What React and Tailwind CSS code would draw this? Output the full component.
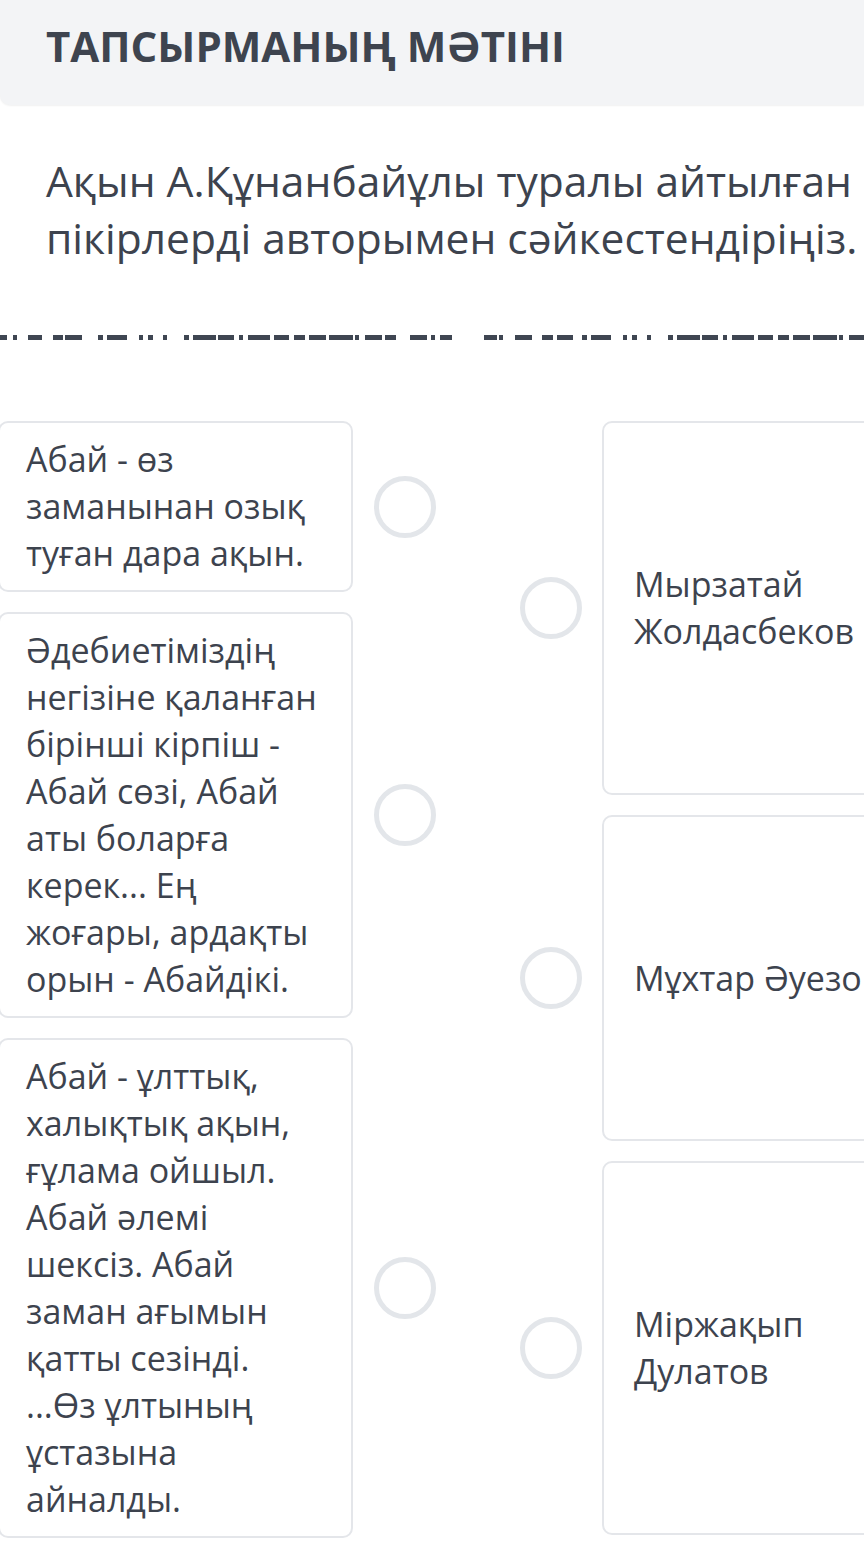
import React from "react";

const SEGS = [
  [0, 7], [13, 17], [28, 42], [53, 63], [65, 82], [98, 103], [107, 127], [139, 143], [148, 153], [163, 167],
  [184, 189], [193, 216], [218, 234], [239, 243], [248, 270], [274, 289], [294, 305], [309, 326], [329, 353],
  [355, 359], [365, 382], [385, 396], [410, 427], [431, 435], [440, 452],
  [484, 497], [499, 503], [515, 532], [542, 553], [557, 573], [582, 587], [591, 611], [623, 627], [632, 637],
  [647, 651], [668, 673], [677, 700], [702, 718], [723, 727], [732, 754], [758, 773], [778, 789], [793, 810],
  [813, 837], [839, 843], [849, 866],
];

function Circle() {
  return (
    <div className="w-[62px] h-[62px] shrink-0 rounded-full border-[5px] border-[#e3e6ea] bg-white" />
  );
}

function LeftCard({ lines }) {
  return (
    <div className="w-[355px] shrink-0 rounded-[10px] border-2 border-[#e4e6ea] bg-white pl-[26px] pr-2 py-[13px] text-[34px] leading-[47px] text-[#3d434e] whitespace-nowrap">
      {lines.map((l, i) => (
        <div key={i}>{l}</div>
      ))}
    </div>
  );
}

function RightCard({ lines, h }) {
  return (
    <div
      className={`w-[300px] shrink-0 rounded-[10px] border-2 border-[#e4e6ea] bg-white pl-[30px] flex flex-col justify-center text-[34px] leading-[47px] text-[#3d434e] whitespace-nowrap ${h}`}
    >
      {lines.map((l, i) => (
        <div key={i}>{l}</div>
      ))}
    </div>
  );
}

export default function App() {
  return (
    <div
      className="w-[864px] h-[1548px] overflow-hidden bg-white relative"
      style={{ fontFamily: "'Open Sans', 'Noto Sans', sans-serif" }}
    >
      <div className="h-[105px] bg-[#f3f4f6] rounded-bl-[10px] shadow-[0_1px_2px_rgba(0,0,0,0.06)] pl-[46px] pt-[14px]">
        <div className="text-[42px] font-bold text-[#3e444f] leading-normal whitespace-nowrap">
          ТАПСЫРМАНЫҢ МӘТІНІ
        </div>
      </div>

      <div className="pl-[46px] mt-[47px] text-[42.5px] leading-[57px] text-[#3d434e] whitespace-nowrap">
        <div>Ақын А.Құнанбайұлы туралы айтылған</div>
        <div>пікірлерді авторымен сәйкестендіріңіз.</div>
      </div>

      <svg className="block mt-[69px]" width="864" height="5" viewBox="0 0 864 5">
        {SEGS.map(([a, b], i) => (
          <rect key={i} x={a} y="0" width={b - a} height="5" fill="#3f4652" />
        ))}
      </svg>

      <div className="flex mt-[81px] ml-[-2px]">
        <div className="flex flex-col gap-[20px]">
          <div className="flex items-center">
            <LeftCard lines={["Абай - өз", "заманынан озық", "туған дара ақын."]} />
            <div className="ml-[21px]"><Circle /></div>
          </div>
          <div className="flex items-center">
            <LeftCard
              lines={[
                "Әдебиетіміздің",
                "негізіне қаланған",
                "бірінші кірпіш -",
                "Абай сөзі, Абай",
                "аты боларға",
                "керек... Ең",
                "жоғары, ардақты",
                "орын - Абайдікі.",
              ]}
            />
            <div className="ml-[21px]"><Circle /></div>
          </div>
          <div className="flex items-center">
            <LeftCard
              lines={[
                "Абай - ұлттық,",
                "халықтық ақын,",
                "ғұлама ойшыл.",
                "Абай әлемі",
                "шексіз. Абай",
                "заман ағымын",
                "қатты сезінді.",
                "...Өз ұлтының",
                "ұстазына",
                "айналды.",
              ]}
            />
            <div className="ml-[21px]"><Circle /></div>
          </div>
        </div>

        <div className="flex flex-col gap-[20px] ml-[84px]">
          <div className="flex items-center">
            <Circle />
            <div className="ml-[20px]">
              <RightCard h="h-[374px]" lines={["Мырзатай", "Жолдасбеков"]} />
            </div>
          </div>
          <div className="flex items-center">
            <Circle />
            <div className="ml-[20px]">
              <RightCard h="h-[326px]" lines={["Мұхтар Әуезов"]} />
            </div>
          </div>
          <div className="flex items-center">
            <Circle />
            <div className="ml-[20px]">
              <RightCard h="h-[374px]" lines={["Міржақып", "Дулатов"]} />
            </div>
          </div>
        </div>
      </div>
    </div>
  );
}
